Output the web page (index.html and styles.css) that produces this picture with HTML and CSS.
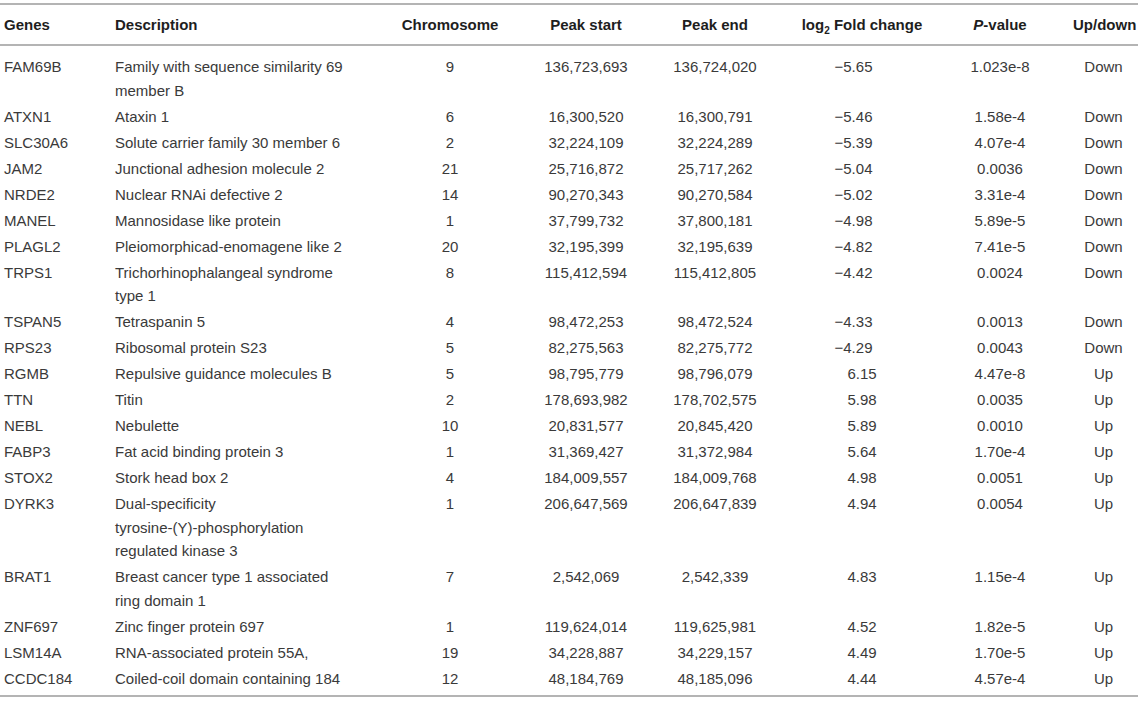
FILE: index.html
```html
<!DOCTYPE html>
<html lang="en">
<head>
  <meta charset="UTF-8">
  <title>Differentially accessible peaks</title>
  <link rel="stylesheet" href="styles.css">
</head>
<body>
  <table class="peaks">
    <colgroup>
      <col class="c-gene">
      <col class="c-desc">
      <col class="c-chr">
      <col class="c-start">
      <col class="c-end">
      <col class="c-fold">
      <col class="c-p">
      <col class="c-dir">
    </colgroup>
    <thead>
      <tr>
        <th class="left">Genes</th>
        <th class="left">Description</th>
        <th>Chromosome</th>
        <th>Peak start</th>
        <th>Peak end</th>
        <th>log<sub>2</sub> Fold change</th>
        <th><i>P</i>-value</th>
        <th>Up/down</th>
      </tr>
    </thead>
    <tbody>
      <tr><td class="left">FAM69B</td><td class="left">Family with sequence similarity 69 member B</td><td>9</td><td>136,723,693</td><td>136,724,020</td><td><span class="neg">&minus;5.65</span></td><td>1.023e-8</td><td>Down</td></tr>
      <tr><td class="left">ATXN1</td><td class="left">Ataxin 1</td><td>6</td><td>16,300,520</td><td>16,300,791</td><td><span class="neg">&minus;5.46</span></td><td>1.58e-4</td><td>Down</td></tr>
      <tr><td class="left">SLC30A6</td><td class="left">Solute carrier family 30 member 6</td><td>2</td><td>32,224,109</td><td>32,224,289</td><td><span class="neg">&minus;5.39</span></td><td>4.07e-4</td><td>Down</td></tr>
      <tr><td class="left">JAM2</td><td class="left">Junctional adhesion molecule 2</td><td>21</td><td>25,716,872</td><td>25,717,262</td><td><span class="neg">&minus;5.04</span></td><td>0.0036</td><td>Down</td></tr>
      <tr><td class="left">NRDE2</td><td class="left">Nuclear RNAi defective 2</td><td>14</td><td>90,270,343</td><td>90,270,584</td><td><span class="neg">&minus;5.02</span></td><td>3.31e-4</td><td>Down</td></tr>
      <tr><td class="left">MANEL</td><td class="left">Mannosidase like protein</td><td>1</td><td>37,799,732</td><td>37,800,181</td><td><span class="neg">&minus;4.98</span></td><td>5.89e-5</td><td>Down</td></tr>
      <tr><td class="left">PLAGL2</td><td class="left">Pleiomorphicad-enomagene like 2</td><td>20</td><td>32,195,399</td><td>32,195,639</td><td><span class="neg">&minus;4.82</span></td><td>7.41e-5</td><td>Down</td></tr>
      <tr><td class="left">TRPS1</td><td class="left">Trichorhinophalangeal syndrome type 1</td><td>8</td><td>115,412,594</td><td>115,412,805</td><td><span class="neg">&minus;4.42</span></td><td>0.0024</td><td>Down</td></tr>
      <tr><td class="left">TSPAN5</td><td class="left">Tetraspanin 5</td><td>4</td><td>98,472,253</td><td>98,472,524</td><td><span class="neg">&minus;4.33</span></td><td>0.0013</td><td>Down</td></tr>
      <tr><td class="left">RPS23</td><td class="left">Ribosomal protein S23</td><td>5</td><td>82,275,563</td><td>82,275,772</td><td><span class="neg">&minus;4.29</span></td><td>0.0043</td><td>Down</td></tr>
      <tr><td class="left">RGMB</td><td class="left">Repulsive guidance molecules B</td><td>5</td><td>98,795,779</td><td>98,796,079</td><td>6.15</td><td>4.47e-8</td><td>Up</td></tr>
      <tr><td class="left">TTN</td><td class="left">Titin</td><td>2</td><td>178,693,982</td><td>178,702,575</td><td>5.98</td><td>0.0035</td><td>Up</td></tr>
      <tr><td class="left">NEBL</td><td class="left">Nebulette</td><td>10</td><td>20,831,577</td><td>20,845,420</td><td>5.89</td><td>0.0010</td><td>Up</td></tr>
      <tr><td class="left">FABP3</td><td class="left">Fat acid binding protein 3</td><td>1</td><td>31,369,427</td><td>31,372,984</td><td>5.64</td><td>1.70e-4</td><td>Up</td></tr>
      <tr><td class="left">STOX2</td><td class="left">Stork head box 2</td><td>4</td><td>184,009,557</td><td>184,009,768</td><td>4.98</td><td>0.0051</td><td>Up</td></tr>
      <tr><td class="left">DYRK3</td><td class="left"><span class="nowrap">Dual-specificity</span> <span class="nowrap">tyrosine-(Y)-phosphorylation</span> regulated kinase 3</td><td>1</td><td>206,647,569</td><td>206,647,839</td><td>4.94</td><td>0.0054</td><td>Up</td></tr>
      <tr><td class="left">BRAT1</td><td class="left">Breast cancer type 1 associated ring domain 1</td><td>7</td><td>2,542,069</td><td>2,542,339</td><td>4.83</td><td>1.15e-4</td><td>Up</td></tr>
      <tr><td class="left">ZNF697</td><td class="left">Zinc finger protein 697</td><td>1</td><td>119,624,014</td><td>119,625,981</td><td>4.52</td><td>1.82e-5</td><td>Up</td></tr>
      <tr><td class="left">LSM14A</td><td class="left">RNA-associated protein 55A,</td><td>19</td><td>34,228,887</td><td>34,229,157</td><td>4.49</td><td>1.70e-5</td><td>Up</td></tr>
      <tr><td class="left">CCDC184</td><td class="left">Coiled-coil domain containing 184</td><td>12</td><td>48,184,769</td><td>48,185,096</td><td>4.44</td><td>4.57e-4</td><td>Up</td></tr>
    </tbody>
  </table>
</body>
</html>
```

FILE: styles.css
```css
body {
  margin: 0;
  background: #fff;
  font-family: "Liberation Sans", Arial, sans-serif;
  font-size: 15px;
  color: #3a3a3a;
}
.peaks {
  width: 1138px;
  margin-top: 3px;
  border-collapse: collapse;
  table-layout: fixed;
  border-top: 2px solid #b4b4b4;
  border-bottom: 2px solid #b4b4b4;
}
.c-gene { width: 111px; }
.c-desc { width: 254px; }
.c-chr { width: 170px; }
.c-start { width: 102px; }
.c-end { width: 156px; }
.c-fold { width: 138px; }
.c-p { width: 138px; }
.c-dir { width: 69px; }

.peaks th {
  padding: 9px 4px 8px;
  line-height: 22px;
  font-weight: bold;
  color: #1e1e1e;
  text-align: center;
  white-space: nowrap;
  border-bottom: 2px solid #b4b4b4;
}
.peaks th sub {
  font-size: 10px;
  line-height: 0;
}
.peaks td {
  padding: 1.25px 4px;
  line-height: 23.5px;
  text-align: center;
  vertical-align: top;
}
/* la description passe à la ligne plus tôt */
.peaks td:nth-child(2) {
  padding-right: 16px;
}
.peaks tbody tr:first-child td {
  padding-top: 9px;
}
.peaks tbody tr:last-child td {
  padding-bottom: 5px;
}
.peaks .left {
  text-align: left;
}
.nowrap {
  white-space: nowrap;
}
.neg {
  margin-left: -17px; /* le signe moins déborde à gauche */
}
```
